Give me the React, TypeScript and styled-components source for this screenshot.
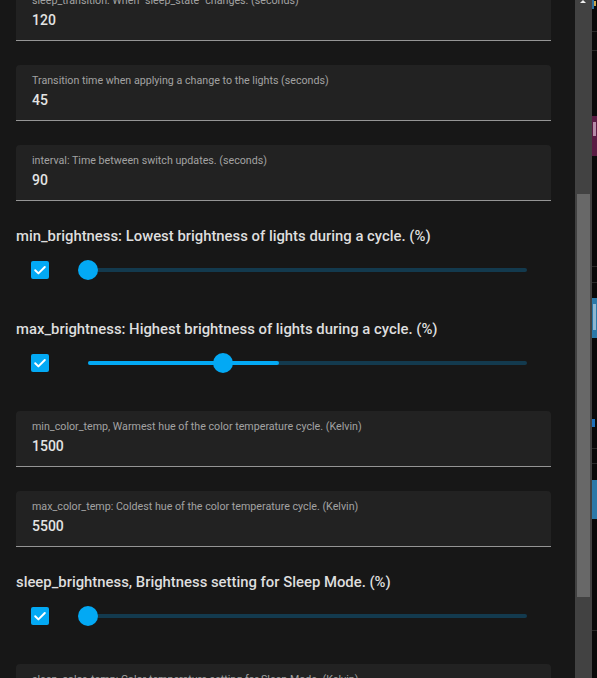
import React from 'react';
import styled, { createGlobalStyle } from 'styled-components';

/**
 * Form data
 */
type FieldItem = { kind: 'field'; label: string; value: string };
type SliderItem = { kind: 'slider'; title: string; value: number; fill: number };
type Item = FieldItem | SliderItem;

const items: Item[] = [
	{ kind: 'field', label: 'sleep_transition: When "sleep_state" changes. (seconds)', value: '120' },
	{ kind: 'field', label: 'Transition time when applying a change to the lights (seconds)', value: '45' },
	{ kind: 'field', label: 'interval: Time between switch updates. (seconds)', value: '90' },
	{ kind: 'slider', title: 'min_brightness: Lowest brightness of lights during a cycle. (%)', value: 0, fill: 0 },
	{ kind: 'slider', title: 'max_brightness: Highest brightness of lights during a cycle. (%)', value: 30.8, fill: 43.5 },
	{ kind: 'field', label: 'min_color_temp, Warmest hue of the color temperature cycle. (Kelvin)', value: '1500' },
	{ kind: 'field', label: 'max_color_temp: Coldest hue of the color temperature cycle. (Kelvin)', value: '5500' },
	{ kind: 'slider', title: 'sleep_brightness, Brightness setting for Sleep Mode. (%)', value: 0, fill: 0 },
	{ kind: 'field', label: 'sleep_color_temp: Color temperature setting for Sleep Mode. (Kelvin)', value: '1000' },
];

function CheckBox() {
	return (
		<Check>
			<svg width="18" height="18" viewBox="0 0 18 18">
				<path d="M4.2 9.2 L7.4 12.4 L13.8 6" fill="none" stroke="#fff" strokeWidth="2" strokeLinecap="round" strokeLinejoin="round" />
			</svg>
		</Check>
	);
}

function Slider({ value, fill }: { value: number; fill: number }) {
	return (
		<SliderBox>
			<Track>
				<Active style={{ width: `${fill}%` }} />
				<Thumb style={{ left: `${value}%` }} />
			</Track>
		</SliderBox>
	);
}

function BackdropSlice() {
	// the page behind the dialog, visible in the thin strip on the right
	return (
		<Strip>
			<svg width="5" height="678" viewBox="0 0 5 678">
				<rect x="0" y="0" width="5" height="678" fill="#0a0a0a" />
				<rect x="0" y="0" width="2" height="9" fill="#2d6f9c" />
				<rect x="2" y="1" width="2" height="5" fill="#c9a64a" />
				<rect x="0" y="31" width="5" height="1" fill="#2a2a2a" />
				<rect x="0" y="50" width="5" height="1" fill="#2a2a2a" />
				<rect x="0" y="116" width="5" height="40" fill="#5a1c44" />
				<rect x="1" y="122" width="3" height="14" fill="#b58aa6" />
				<rect x="0" y="266" width="5" height="1" fill="#2a2a2a" />
				<rect x="0" y="282" width="5" height="1" fill="#2a2a2a" />
				<rect x="0" y="298" width="5" height="40" fill="#2b78a8" />
				<rect x="1" y="304" width="3" height="26" fill="#8fb6d0" />
				<rect x="0" y="419" width="3" height="8" fill="#1d6fb8" />
				<rect x="0" y="448" width="5" height="1" fill="#2a2a2a" />
				<rect x="0" y="463" width="5" height="1" fill="#2a2a2a" />
				<rect x="0" y="480" width="5" height="39" fill="#2b78a8" />
				<rect x="0" y="630" width="5" height="1" fill="#2a2a2a" />
			</svg>
		</Strip>
	);
}

export default function App() {
	return (
		<React.Fragment>
			<GlobalStyle />
			<Screen>
				<Dialog>
					<Form>
						{items.map((item, i) =>
							item.kind === 'field' ? (
								<Field key={i}>
									<FieldLabel>{item.label}</FieldLabel>
									<FieldValue>{item.value}</FieldValue>
								</Field>
							) : (
								<Section key={i}>
									<Heading>{item.title}</Heading>
									<Row>
										<CheckBox />
										<Slider value={item.value} fill={item.fill} />
									</Row>
								</Section>
							)
						)}
					</Form>
				</Dialog>
				<ScrollBar>
					<Arrow />
					<ScrollThumb />
				</ScrollBar>
				<BackdropSlice />
			</Screen>
		</React.Fragment>
	);
}

/**
 * Styled Components...
 */
const GlobalStyle = createGlobalStyle`
	html, body {
		margin: 0;
		padding: 0;
		background: #0a0a0a;
		overflow: hidden;
	}
	body {
		font-family: Roboto, "Liberation Sans", sans-serif;
	}
`;
const Screen = styled.div`
	display: flex;
	width: 597px;
	height: 678px;
	overflow: hidden;
`;
const Dialog = styled.div`
	flex: 1;
	background: #171717;
	overflow: hidden;
`;
const Form = styled.div`
	display: flex;
	flex-direction: column;
	padding: 0 24px 0 16px;
	margin-top: -15px;
`;
const Field = styled.div`
	display: flex;
	flex-direction: column;
	padding: 9px 16px 0;
	box-sizing: border-box;
	height: 56px;
	background: #222222;
	border-radius: 4px 4px 0 0;
	border-bottom: 1px solid #959595;
	&:not(:first-child) {
		margin-top: 24px;
	}
`;
const FieldLabel = styled.div`
	font-size: 10.7px;
	line-height: 14px;
	color: #a2a2a2;
	white-space: nowrap;
`;
const FieldValue = styled.div`
	margin-top: 3px;
	font-size: 14px;
	line-height: 18px;
	font-weight: 500;
	color: #e4e4e4;
`;
const Section = styled.div`
	display: flex;
	flex-direction: column;
	padding: 25px 0 4px;
`;
const Heading = styled.div`
	font-size: 14.85px;
	line-height: 20px;
	font-weight: 500;
	color: #dedede;
	white-space: nowrap;
`;
const Row = styled.div`
	display: flex;
	align-items: center;
	height: 40px;
	margin-top: 4px;
	padding: 0 14px 0 15px;
`;
const Check = styled.div`
	width: 18px;
	height: 18px;
	border-radius: 2px;
	background: #03a9f4;
	flex: none;
	svg {
		display: block;
	}
`;
const SliderBox = styled.div`
	flex: 1;
	height: 40px;
	margin-left: 29px;
	padding: 0 10px;
	display: flex;
	align-items: center;
`;
const Track = styled.div`
	position: relative;
	flex: 1;
	height: 4px;
	border-radius: 2px;
	background: #133a4e;
`;
const Active = styled.div`
	height: 100%;
	border-radius: 2px;
	background: #03a9f4;
`;
const Thumb = styled.div`
	position: absolute;
	top: 50%;
	width: 20px;
	height: 20px;
	margin: -10px 0 0 -10px;
	border-radius: 50%;
	background: #03a9f4;
`;
const ScrollBar = styled.div`
	width: 17px;
	flex: none;
	background: #424242;
	display: flex;
	flex-direction: column;
	align-items: center;
`;
const Arrow = styled.div`
	width: 0;
	height: 0;
	margin-left: -1px;
	border-left: 3px solid transparent;
	border-right: 3px solid transparent;
	border-bottom: 3px solid #f0f0f0;
`;
const ScrollThumb = styled.div`
	width: 13px;
	height: 403px;
	margin-top: 191px;
	background: #686868;
`;
const Strip = styled.div`
	width: 5px;
	flex: none;
	svg {
		display: block;
	}
`;
